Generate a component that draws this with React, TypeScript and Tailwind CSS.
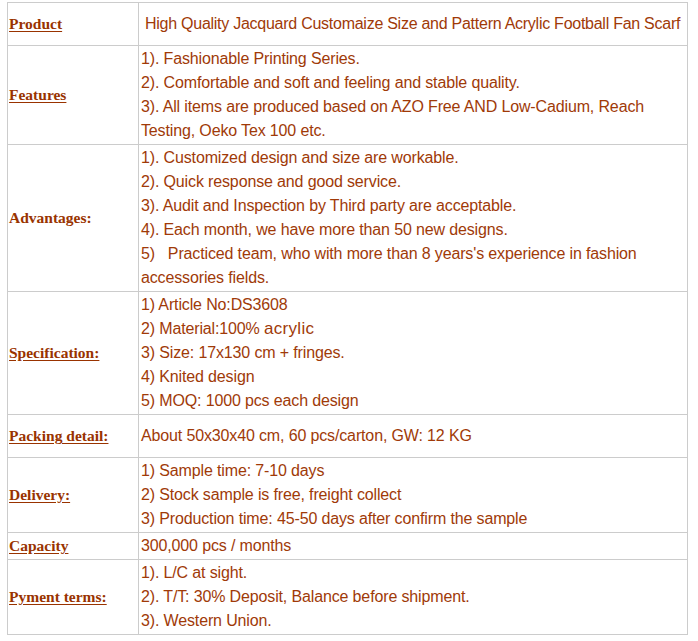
import React from "react";

const sans = { fontFamily: '"Liberation Sans", Arial, sans-serif' };
const serif = { fontFamily: '"Liberation Serif", "Times New Roman", serif' };

type Row = {
  label: string;
  underline: boolean;
  h: string;
  lines: React.ReactNode[];
  pl?: string;
};

const rows: Row[] = [
  {
    label: "Product",
    underline: true,
    h: "h-[42px]",
    pl: "pl-[6px] tracking-[-0.26px]",
    lines: ["High Quality Jacquard Customaize Size and Pattern Acrylic Football Fan Scarf"],
  },
  {
    label: "Features",
    underline: true,
    h: "h-[99px]",
    lines: [
      "1). Fashionable Printing Series.",
      "2). Comfortable and soft and feeling and stable quality.",
      "3). All items are produced based on AZO Free AND Low-Cadium, Reach",
      "Testing, Oeko Tex 100 etc.",
    ],
  },
  {
    label: "Advantages:",
    underline: false,
    h: "h-[147px]",
    lines: [
      "1). Customized design and size are workable.",
      "2). Quick response and good service.",
      "3). Audit and Inspection by Third party are acceptable.",
      "4). Each month, we have more than 50 new designs.",
      "5)\u00a0\u00a0\u00a0Practiced team, who with more than 8 years's experience in fashion",
      "accessories fields.",
    ],
  },
  {
    label: "Specification:",
    underline: true,
    h: "h-[123px]",
    lines: [
      "1) Article No:DS3608",
      <>
        2) Material:100%{" "}
        <span className="text-[17px] tracking-[0.3px]">acrylic</span>
      </>,
      "3) Size: 17x130 cm + fringes.",
      "4) Knited design",
      "5) MOQ: 1000 pcs each design",
    ],
  },
  {
    label: "Packing detail:",
    underline: true,
    h: "h-[43px]",
    lines: ["About 50x30x40 cm, 60 pcs/carton, GW: 12 KG"],
  },
  {
    label: "Delivery:",
    underline: true,
    h: "h-[75px]",
    lines: [
      "1) Sample time: 7-10 days",
      "2) Stock sample is free, freight collect",
      "3) Production time: 45-50 days after confirm the sample",
    ],
  },
  {
    label: "Capacity",
    underline: true,
    h: "h-[27px]",
    lines: ["300,000 pcs / months"],
  },
  {
    label: "Pyment terms:",
    underline: true,
    h: "h-[75px]",
    lines: [
      "1). L/C at sight.",
      "2). T/T: 30% Deposit, Balance before shipment.",
      "3). Western Union.",
    ],
  },
];

export default function App() {
  return (
    <div className="w-[698px] h-[641px] bg-white pt-[2px] pl-[7px]">
      <div className="w-[681px] border border-[#cccccc]">
        {rows.map((r, i) => (
          <div
            key={r.label}
            className={`flex ${r.h} ${i > 0 ? "border-t border-[#cccccc]" : ""}`}
          >
            <div className="w-[131px] shrink-0 border-r border-[#cccccc] flex items-center pl-[1px]">
              <span
                style={serif}
                className={`text-[15.5px] font-bold text-[#993300] ${
                  r.underline ? "underline underline-offset-[2px]" : ""
                }`}
              >
                {r.label}
              </span>
            </div>
            <div
              className={`flex-1 min-w-0 overflow-hidden flex flex-col justify-center ${r.pl ?? "pl-[2px] tracking-[-0.14px]"} text-[16px] leading-[24px] text-[#a03a08] whitespace-nowrap`}
              style={sans}
            >
              {r.lines.map((l, j) => (
                <div key={j}>{l}</div>
              ))}
            </div>
          </div>
        ))}
      </div>
    </div>
  );
}
